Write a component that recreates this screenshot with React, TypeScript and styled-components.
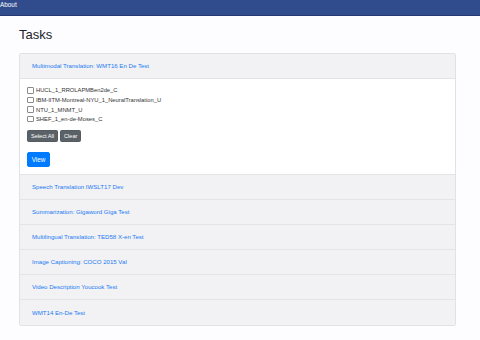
import React from "react";
import styled, { createGlobalStyle } from "styled-components";

const Global = createGlobalStyle`
  html, body { margin: 0; padding: 0; background: #fdfcfe; }
  body { font-family: "Liberation Sans", Arial, sans-serif; color: #212529; }
`;

const Navbar = styled.nav`
  height: 15px;
  background: #314c8c;
  border-bottom: 1px solid #243a70;
  display: flex;
  align-items: center;
`;

const NavLink = styled.a`
  color: #ffffff;
  font-size: 6.4px;
  line-height: 1;
  margin-top: -4px;
  text-decoration: none;
`;

const Container = styled.main`
  padding: 0 24px 0 19px;
`;

const Title = styled.h3`
  margin: 11px 0 10px;
  font-size: 13px;
  font-weight: 500;
  line-height: 1.2;
  color: #212529;
`;

const Accordion = styled.div`
  width: 437px;
  border: 1px solid #e2e1e4;
  border-radius: 2px;
  overflow: hidden;
  box-sizing: border-box;
`;

const Header = styled.div<{ $last?: boolean }>`
  height: 25px;
  box-sizing: border-box;
  background: #f2f1f3;
  border-bottom: ${(p) => (p.$last ? "none" : "1px solid #e4e3e6")};
  display: flex;
  align-items: center;
  padding-left: 12px;
`;

const HeaderLink = styled.a`
  color: #1a7cf3;
  font-size: 6.1px;
  text-decoration: none;
`;

const Body = styled.div`
  background: #ffffff;
  padding: 7px 8px 7px 7px;
  border-bottom: 1px solid #e4e3e6;
`;

const CheckRow = styled.label`
  display: flex;
  align-items: center;
  height: 9.6px;
  font-size: 5.8px;
  color: #333;
`;

const Box = styled.span`
  width: 4.6px;
  height: 4.6px;
  border: 0.6px solid #8a8a8a;
  border-radius: 1px;
  background: #fff;
  margin-right: 2.4px;
`;

const ButtonRow = styled.div`
  display: flex;
  gap: 2px;
  margin-top: 6px;
`;

const SmallButton = styled.button`
  font-family: "Liberation Sans", Arial, sans-serif;
  font-size: 5.6px;
  height: 12px;
  padding: 0 3px;
  background: #5a6268;
  color: #fff;
  border: 1px solid #545b62;
  border-radius: 1.5px;
`;

const ViewButton = styled.button`
  font-family: "Liberation Sans", Arial, sans-serif;
  font-size: 6.4px;
  height: 15px;
  width: 23px;
  margin-top: 10px;
  padding: 0;
  background: #007bff;
  color: #fff;
  border: 1px solid #007bff;
  border-radius: 2px;
`;

const systems = [
  "HUCL_1_RROLAPMBen2de_C",
  "IBM-IITM-Montreal-NYU_1_NeuralTranslation_U",
  "NTU_1_MNMT_U",
  "SHEF_1_en-de-Moses_C",
];

const tasks = [
  "Speech Translation IWSLT17 Dev",
  "Summarization: Gigaword Giga Test",
  "Multilingual Translation: TED58 X-en Test",
  "Image Captioning: COCO 2015 Val",
  "Video Description Youcook Test",
  "WMT14 En-De Test",
];

export default function App() {
  return (
    <>
      <Global />
      <Navbar>
        <NavLink>About</NavLink>
      </Navbar>
      <Container>
        <Title>Tasks</Title>
        <Accordion>
          <Header>
            <HeaderLink>Multimodal Translation: WMT16 En De Test</HeaderLink>
          </Header>
          <Body>
            {systems.map((s) => (
              <CheckRow key={s}>
                <Box />
                {s}
              </CheckRow>
            ))}
            <ButtonRow>
              <SmallButton>Select All</SmallButton>
              <SmallButton>Clear</SmallButton>
            </ButtonRow>
            <ViewButton>View</ViewButton>
          </Body>
          {tasks.map((t, i) => (
            <Header key={t} $last={i === tasks.length - 1}>
              <HeaderLink>{t}</HeaderLink>
            </Header>
          ))}
        </Accordion>
      </Container>
    </>
  );
}
